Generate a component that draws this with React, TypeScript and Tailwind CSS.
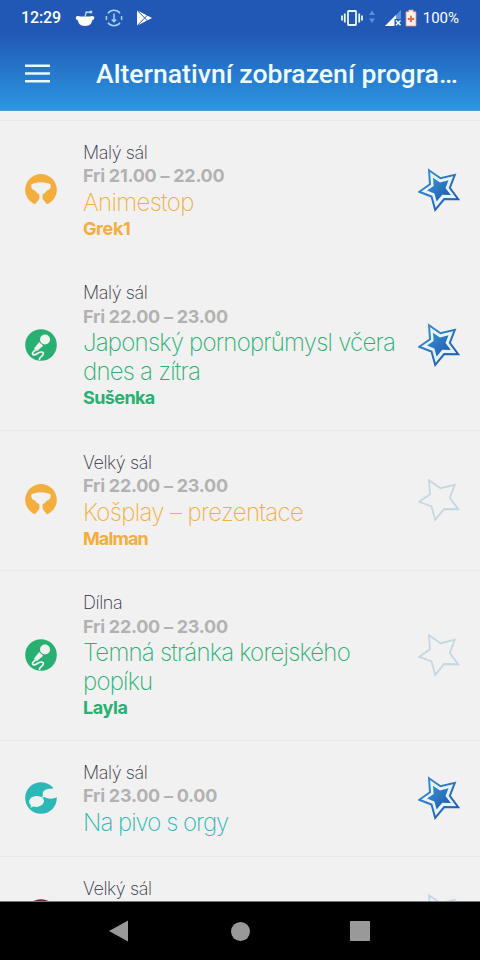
import React, { useState } from 'react';

type Category = 'contest' | 'talk' | 'chat' | 'other';

interface ProgramItem {
  id: number;
  venue: string;
  time: string;
  title: string;
  author?: string;
  category: Category;
  favorite: boolean;
  titleTracking: string;
  authorTracking?: string;
}

const program: ProgramItem[] = [
  { id: 1, venue: 'Malý sál', time: 'Fri 21.00 – 22.00', title: 'Animestop', author: 'Grek1', category: 'contest', favorite: true, titleTracking: 'tracking-[-0.65px]', authorTracking: 'tracking-[-0.4px]' },
  { id: 2, venue: 'Malý sál', time: 'Fri 22.00 – 23.00', title: 'Japonský pornoprůmysl včera dnes a zítra', author: 'Sušenka', category: 'talk', favorite: true, titleTracking: 'tracking-[-0.77px]', authorTracking: 'tracking-[-0.6px]' },
  { id: 3, venue: 'Velký sál', time: 'Fri 22.00 – 23.00', title: 'Košplay – prezentace', author: 'Malman', category: 'contest', favorite: false, titleTracking: 'tracking-[-0.65px]', authorTracking: 'tracking-[-0.9px]' },
  { id: 4, venue: 'Dílna', time: 'Fri 22.00 – 23.00', title: 'Temná stránka korejského popíku', author: 'Layla', category: 'talk', favorite: false, titleTracking: 'tracking-[-0.78px]', authorTracking: 'tracking-[-0.4px]' },
  { id: 5, venue: 'Malý sál', time: 'Fri 23.00 – 0.00', title: 'Na pivo s orgy', category: 'chat', favorite: true, titleTracking: 'tracking-[-1px]' },
  { id: 6, venue: 'Velký sál', time: 'Fri 23.00 – 0.00', title: 'Anime', category: 'other', favorite: false, titleTracking: 'tracking-[-0.65px]' },
];

const textColors: Record<Category, string> = {
  contest: 'text-[#f3ae3d]',
  talk: 'text-[#27b071]',
  chat: 'text-[#2cb8b6]',
  other: 'text-[#6b1f3d]',
};

function CategoryIcon({ category }: { category: Category }) {
  return (
    <svg viewBox="0 0 32 32" className={`-mt-px size-8 shrink-0 ${textColors[category]}`}>
      {category === 'contest' && (
        <>
          <path d="M10.5 30.6A15.8 15.8 0 1 1 21.5 30.6Q19 28.5 18.3 26.8H13.7Q13 28.5 10.5 30.6Z" fill="currentColor" />
          <path d="M6.5 10.2L9.5 9.2Q16 7.4 22.5 9.2L25.5 10.2C26.3 13.5 25 15.8 21.8 16.5C20.8 18.6 18.8 19.8 17.6 20.4V24.5C18.2 26.5 20.5 27.5 22 31H10C11.5 27.5 13.8 26.5 14.4 24.5V20.4C13.2 19.8 11.2 18.6 10.2 16.5C7 15.8 5.7 13.5 6.5 10.2Z" fill="#f1f1f1" />
        </>
      )}
      {category === 'talk' && (
        <>
          <circle cx="16" cy="16" r="15.8" fill="currentColor" />
          <circle cx="20" cy="10.5" r="5" fill="#f1f1f1" />
          <path d="M14.2 13L18.2 16.8L11.8 22.2L9 19.6Z" fill="#f1f1f1" />
          <path d="M10.5 21C5.5 24.5 7.5 27.5 11.5 25C15.5 22 20 22.5 17.8 26C16 28.6 13.8 28.4 14.5 31" fill="none" stroke="#f1f1f1" strokeWidth="1.7" />
        </>
      )}
      {category === 'chat' && (
        <>
          <circle cx="16" cy="16" r="15.8" fill="currentColor" />
          <path d="M32 6V15C28 17.4 22 17 19.8 15L16.8 15.8L18 13C16.5 8.5 22 6 27 6.8L28.5 6Z" fill="#f1f1f1" />
          <path d="M5.3 25.8L6.2 23.4C2.2 20.6 4.2 14.6 11 14C18 13.6 20.6 18.4 18 21.8C15.4 25 11 25.4 8.4 24.4Z" fill="#f1f1f1" />
        </>
      )}
      {category === 'other' && <circle cx="16" cy="16" r="15.8" fill="currentColor" />}
    </svg>
  );
}

function StarIcon({ active }: { active: boolean }) {
  const outline = 'M11 2.2L22.5 10.2L36.8 6.8L31.8 19.8L40.2 31.2L26.2 31L17.2 41.8L13.5 28.5L1.2 23.8L12 16.2Z';
  return (
    <svg viewBox="0 0 44 44" className="size-11">
      <defs>
        <linearGradient id="starFill" x1="0" y1="0" x2="1" y2="1">
          <stop offset="0" stopColor="#3b91d5" />
          <stop offset="1" stopColor="#1d58aa" />
        </linearGradient>
      </defs>
      <path d={outline} fill={active ? '#e5f4fb' : 'none'} stroke={active ? 'url(#starFill)' : '#c4d8e2'} strokeWidth={active ? 2 : 1.8} />
      {active && (
        <path d="M15 9.8L22 14.4L30.5 12.3L27.5 20L32.8 27L24.3 26.8L18.6 33.6L16.4 25.6L9 22.6L15.6 18.1Z" fill="url(#starFill)" />
      )}
    </svg>
  );
}

function StatusBar() {
  return (
    <div className="flex h-9 items-center pl-[21px] pr-[21px] text-white">
      <span className="text-base font-medium tracking-[-0.1px]">12:29</span>
      <svg viewBox="0 0 20 18" className="ml-[14px] h-[18px] w-5">
        <path d="M2.5 7.5H17.5Q18 17 10 17T2.5 7.5Z" fill="#fff" />
        <circle cx="2.8" cy="9" r="2.1" fill="#fff" />
        <circle cx="17.2" cy="9" r="2.1" fill="#fff" />
        <path d="M10 8L11.2 3L15.5 3.4" fill="none" stroke="#b7ddf8" strokeWidth="1.3" />
        <circle cx="15.8" cy="3" r="1.6" fill="#b7ddf8" />
      </svg>
      <svg viewBox="0 0 18 18" className="ml-2.5 size-[18px]" fill="none" stroke="#a5d2f5" strokeWidth="1.5">
        <path d="M3 4.2A7.5 7.5 0 0 1 15 4.2M15 13.8A7.5 7.5 0 0 1 3 13.8M1.4 7V11M16.6 7V11" />
        <path d="M9 4.5V12.5M6.8 10.4L9 12.7L11.2 10.4" />
      </svg>
      <svg viewBox="0 0 18 18" className="ml-3 size-[18px]">
        <path d="M2 1.2L17 9L2 16.8Z" fill="#fff" />
        <path d="M2 1.2L12.8 12.2M2 16.8L12.8 5.8" stroke="#235ab5" strokeWidth="1" />
      </svg>
      <div className="flex-1" />
      <svg viewBox="0 0 22 18" className="h-[18px] w-[22px]" fill="none" stroke="#e9f8ff" strokeWidth="1.8">
        <rect x="7" y="2" width="8" height="14" rx="0.5" />
        <path d="M3.8 4.5V13.5M1 6.5V11.5M18.2 4.5V13.5M21 6.5V11.5" />
      </svg>
      <svg viewBox="0 0 8 14" className="mb-0.5 ml-[5px] h-3.5 w-2" fill="#5c91d6">
        <path d="M4 0.5L7 5H1ZM4 13L1 8.5H7Z" />
      </svg>
      <svg viewBox="0 0 18 18" className="ml-2 size-[18px]">
        <path d="M17 1V17H1Z" fill="#5b94d9" />
        <path d="M12 6V17H1Z" fill="#fff" />
        <path d="M10.5 10H18V18H10.5Z" fill="#235ab5" />
        <path d="M12 11.5L16.5 16.3M16.5 11.5L12 16.3" stroke="#fff" strokeWidth="1.4" />
      </svg>
      <svg viewBox="0 0 12 18" className="ml-[3px] h-[18px] w-3">
        <path d="M1 2.8H3.8V1H8.2V2.8H11V17H1Z" fill="#fff1e9" stroke="#ef9275" strokeWidth="0.8" />
        <path d="M6 6.7V13.3M2.8 10H9.2" stroke="#ec6b43" strokeWidth="1.8" />
      </svg>
      <span className="ml-1.5 text-[15px]">100%</span>
    </div>
  );
}

export default function App() {
  const [items, setItems] = useState(program);

  const toggleFavorite = (id: number) => {
    setItems(items.map(item => (item.id === id ? { ...item, favorite: !item.favorite } : item)));
  };

  return (
    <div className="flex h-[960px] w-[480px] flex-col overflow-hidden bg-[#f1f1f2] font-['Roboto',sans-serif]">
      {/* Header */}
      <header className="h-[111px] shrink-0 border-b border-[#4d9cce] bg-linear-to-b from-[#2158b6] from-30% to-[#2c97e3]">
        <StatusBar />
        <div className="flex h-[75px] items-center pl-[25px]">
          <button aria-label="Menu">
            <svg viewBox="0 0 25 19" className="h-[19px] w-[25px]" stroke="#e6faff" strokeWidth="2.6">
              <path d="M0 1.8H25M0 9.5H25M0 17.2H25" />
            </svg>
          </button>
          <h1 className="mt-px ml-[46px] w-[374px] truncate text-[26.6px] leading-9 font-medium text-[#f0fcff]">
            Alternativní zobrazení programu
          </h1>
        </div>
      </header>

      {/* Program list */}
      <main className="min-h-0 flex-1 overflow-hidden pt-[9px]">
        {items.map(item => (
          <article
            key={item.id}
            className={`flex items-center border-t pt-[19.6px] pb-[19.9px] pl-[25px] ${item.id === 2 ? 'border-transparent' : 'border-[#e9e9ea]'}`}
          >
            <CategoryIcon category={item.category} />
            <div className="ml-[26px] w-[325px] shrink-0 font-['Inter',sans-serif]">
              <p className="text-[18px] leading-[23.5px] font-extralight tracking-[-0.4px] text-[#30303f]">{item.venue}</p>
              <p className="text-[18px] leading-[23.5px] font-bold tracking-[-0.25px] text-[#b2b2b2]">{item.time}</p>
              <h2 className={`text-2xl leading-[29px] font-extralight ${item.titleTracking} ${textColors[item.category]}`}>{item.title}</h2>
              {item.author && (
                <p className={`text-[18px] leading-6 font-bold ${item.authorTracking} ${textColors[item.category]}`}>{item.author}</p>
              )}
            </div>
            <button className="-mt-px ml-[9.5px]" onClick={() => toggleFavorite(item.id)} aria-label="Favorite">
              <StarIcon active={item.favorite} />
            </button>
          </article>
        ))}
      </main>

      {/* Android navigation */}
      <nav className="flex h-[59px] shrink-0 items-center border-t border-[#777] bg-black pl-[108px]">
        <svg viewBox="0 0 20 22" className="h-[22px] w-5" fill="#999"><path d="M1 11L20 0.5V21.5Z" /></svg>
        <span className="ml-[102.5px] size-[19px] rounded-full bg-[#999]" />
        <span className="ml-[100.5px] size-5 rounded-[1px] bg-[#999]" />
      </nav>
    </div>
  );
}
